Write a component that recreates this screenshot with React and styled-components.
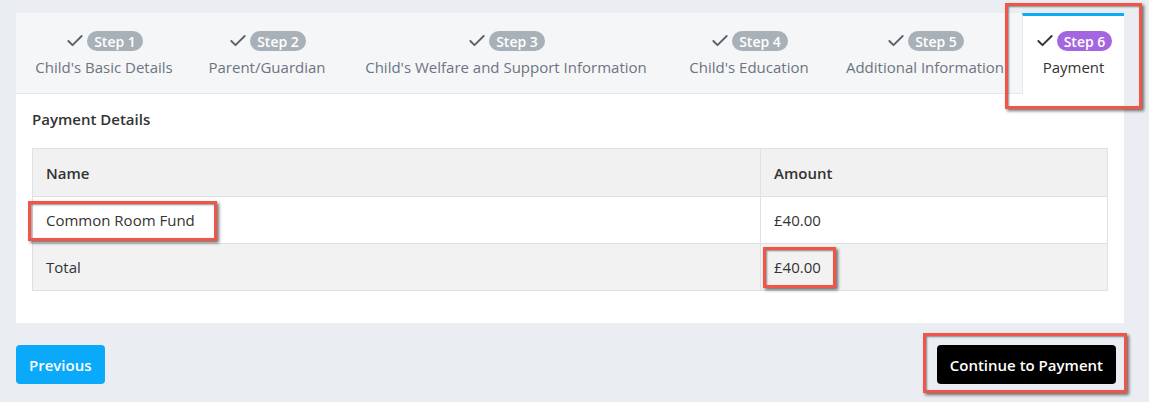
import React from 'react';
import styled, { createGlobalStyle, css } from 'styled-components';
import { Check } from 'lucide-react';

const GlobalStyle = createGlobalStyle`
    body {
        margin: 0;
        background: #eaedf1;
        font-family: "Open Sans", "Liberation Sans", sans-serif;
        color: #333;
    }
`;

const steps = [
    { n: 1, label: "Child's Basic Details", w: 176 },
    { n: 2, label: 'Parent/Guardian', w: 150 },
    { n: 3, label: "Child's Welfare and Support Information", w: 328 },
    { n: 4, label: "Child's Education", w: 158 },
    { n: 5, label: 'Additional Information', w: 194 },
    { n: 6, label: 'Payment', w: 102, active: true },
];

const StepTab = ({ step }) => (
    <Tab $w={step.w} $active={step.active}>
        <StepLine>
            <Check size={20} strokeWidth={2.3} color={step.active ? '#2f3337' : '#5b626b'} />
            <Badge $active={step.active}>Step {step.n}</Badge>
        </StepLine>
        <Label $active={step.active}>{step.label}</Label>
    </Tab>
);

const App = () => {
    return (
        <Page>
            <GlobalStyle />
            <Card>
                <Tabs>
                    {steps.map((s) =>
                        s.active ? (
                            <Marked key={s.n} $top={-10} $right={-18} $bottom={-16} $left={-17}>
                                <StepTab step={s} />
                            </Marked>
                        ) : (
                            <StepTab key={s.n} step={s} />
                        )
                    )}
                </Tabs>
                <Body>
                    <Heading>Payment Details</Heading>
                    <Table>
                        <thead>
                            <tr>
                                <Th $w={728}>Name</Th>
                                <Th>Amount</Th>
                            </tr>
                        </thead>
                        <tbody>
                            <Row>
                                <Td>
                                    <Marked $top={-9} $right={-22} $bottom={-11} $left={-18}>
                                        Common Room Fund
                                    </Marked>
                                </Td>
                                <Td>£40.00</Td>
                            </Row>
                            <Row $shade>
                                <Td>Total</Td>
                                <Td>
                                    <Marked $top={-10} $right={-15} $bottom={-11} $left={-11}>
                                        £40.00
                                    </Marked>
                                </Td>
                            </Row>
                        </tbody>
                    </Table>
                </Body>
            </Card>
            <Footer>
                <Button>Previous</Button>
                <Marked $top={-12} $right={-11} $bottom={-9} $left={-14}>
                    <Button $dark>Continue to Payment</Button>
                </Marked>
            </Footer>
        </Page>
    );
};

const Page = styled.div`
    padding: 13px 25px 18px 16px;
`;

const Card = styled.div`
    background: #fff;
`;

const Tabs = styled.div`
    display: flex;
    background: #f5f6f8;
    border-bottom: 1px solid #e4e7eb;
    height: 80px;
`;

const Tab = styled.div`
    display: flex;
    flex-direction: column;
    align-items: center;
    flex: none;
    width: ${(p) => p.$w}px;
    box-sizing: border-box;
    height: 81px;
    padding-top: 18px;
    white-space: nowrap;
    ${(p) =>
        p.$active &&
        css`
            background: #fff;
            border-top: 3px solid #10a9f3;
            border-left: 1px solid #e6e8ec;
            padding-top: 15px;
        `}
`;

const StepLine = styled.div`
    display: flex;
    align-items: center;
    gap: 2px;
    height: 20px;
`;

const Badge = styled.span`
    display: inline-flex;
    align-items: center;
    height: 20px;
    padding: 0 7px;
    border-radius: 10px;
    background: ${(p) => (p.$active ? '#a466e0' : '#a8b0b8')};
    color: #fff;
    font-size: 14px;
    font-weight: 600;
`;

const Label = styled.div`
    margin-top: 6px;
    font-size: 15px;
    line-height: 20px;
    color: ${(p) => (p.$active ? '#333' : '#6c7480')};
`;

const Body = styled.div`
    padding: 15px 16px 32px;
`;

const Heading = styled.div`
    font-size: 15px;
    font-weight: 600;
    line-height: 20px;
    color: #333;
    margin-bottom: 19px;
`;

const Table = styled.table`
    width: 100%;
    border-collapse: collapse;
    font-size: 15px;
    color: #333;
`;

const Th = styled.th`
    box-sizing: border-box;
    width: ${(p) => (p.$w ? `${p.$w}px` : 'auto')};
    text-align: left;
    font-weight: 600;
    height: 48px;
    padding: 0 13px;
    background: #f1f1f2;
    border: 1px solid #dde0e4;
`;

const Row = styled.tr`
    background: ${(p) => (p.$shade ? '#f2f2f3' : '#fff')};
`;

const Td = styled.td`
    height: 46px;
    padding: 0 13px;
    border: 1px solid #dde0e4;
`;

const Footer = styled.div`
    display: flex;
    justify-content: space-between;
    align-items: center;
    margin-top: 22px;
    padding-right: 8px;
`;

const Button = styled.button`
    height: 39px;
    padding: 0 13px;
    border: none;
    border-radius: 4px;
    background: ${(p) => (p.$dark ? '#000' : '#0aa9fa')};
    color: #fff;
    font-family: "Open Sans", "Liberation Sans", sans-serif;
    font-size: 15px;
    font-weight: 600;
`;

const Marked = styled.span`
    position: relative;
    display: inline-flex;
    &::after {
        content: '';
        position: absolute;
        top: ${(p) => p.$top}px;
        right: ${(p) => p.$right}px;
        bottom: ${(p) => p.$bottom}px;
        left: ${(p) => p.$left}px;
        border: 3px solid #f05647;
        box-shadow: 2px 2px 3px rgba(0, 0, 0, 0.55), inset 1px 1px 2px rgba(0, 0, 0, 0.45);
        pointer-events: none;
    }
`;

export default App;
